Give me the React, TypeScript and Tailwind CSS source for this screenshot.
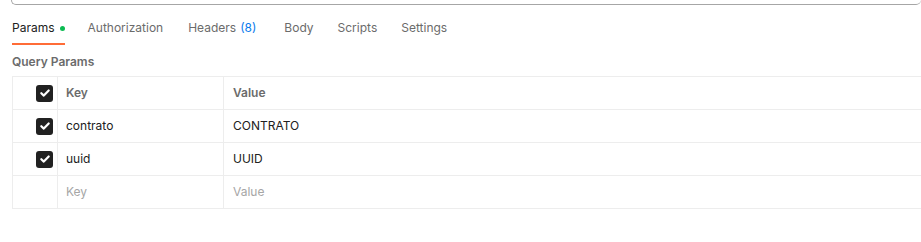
import React from "react";

function Check() {
  return (
    <span className="flex h-[17px] w-[17px] items-center justify-center rounded-[3px] bg-[#212121]">
      <svg width="12" height="12" viewBox="0 0 12 12" fill="none">
        <path d="M2.3 6.2 L4.8 8.6 L9.7 3.5" stroke="#fff" strokeWidth="2.2" strokeLinecap="round" strokeLinejoin="round" />
      </svg>
    </span>
  );
}

const rows = [
  { key: "contrato", value: "CONTRATO" },
  { key: "uuid", value: "UUID" },
];

export default function App() {
  return (
    <div className="h-[242px] w-[921px] overflow-hidden bg-white text-[12px]" style={{ fontFamily: "Inter, 'Noto Sans', sans-serif" }}>
      <div className="ml-[11px] mt-[-20px] h-[25px] rounded-b-[5px] border border-[#a6a6a6] border-r-0" />
      <div className="mt-[12px] flex items-start pl-[12px] text-[12px] text-[#6b6b6b]">
        <div className="flex flex-col">
          <div className="flex h-[22px] items-center text-[#212121]">
            Params
            <span className="ml-[5px] h-[5px] w-[5px] rounded-full bg-[#0cbb52]" />
          </div>
          <div className="mt-[4px] h-[2px] bg-[#ff6c37]" />
        </div>
        <div className="ml-[23px] flex h-[22px] items-center">Authorization</div>
        <div className="ml-[25px] flex h-[22px] items-center">
          Headers <span className="ml-[4px] text-[#097bed]">(8)</span>
        </div>
        <div className="ml-[28px] flex h-[22px] items-center">Body</div>
        <div className="ml-[24px] flex h-[22px] items-center">Scripts</div>
        <div className="ml-[24px] flex h-[22px] items-center">Settings</div>
      </div>
      <div className="mt-[8px] pl-[12px] font-semibold text-[#6b6b6b]">Query Params</div>
      <div className="ml-[12px] mt-[5px] border-t border-l border-[#ededed]">
        <div className="flex h-[33px] border-b border-[#ededed]">
          <div className="flex w-[45px] items-center justify-end border-r border-[#ededed] pr-[4px]">
            <Check />
          </div>
          <div className="flex w-[166px] items-center border-r border-[#ededed] pl-[8px] font-semibold text-[#6b6b6b]">Key</div>
          <div className="flex flex-1 items-center pl-[9px] font-semibold text-[#6b6b6b]">Value</div>
        </div>
        {rows.map((r) => (
          <div key={r.key} className="flex h-[33px] border-b border-[#ededed]">
            <div className="flex w-[45px] items-center justify-end border-r border-[#ededed] pr-[4px]">
              <Check />
            </div>
            <div className="flex w-[166px] items-center border-r border-[#ededed] pl-[8px] text-[#212121]">{r.key}</div>
            <div className="flex flex-1 items-center pl-[9px] text-[#212121]">{r.value}</div>
          </div>
        ))}
        <div className="flex h-[33px] border-b border-[#ededed]">
          <div className="w-[45px] border-r border-[#ededed]" />
          <div className="flex w-[166px] items-center border-r border-[#ededed] pl-[8px] text-[#a6a6a6]">Key</div>
          <div className="flex flex-1 items-center pl-[9px] text-[#a6a6a6]">Value</div>
        </div>
      </div>
    </div>
  );
}
